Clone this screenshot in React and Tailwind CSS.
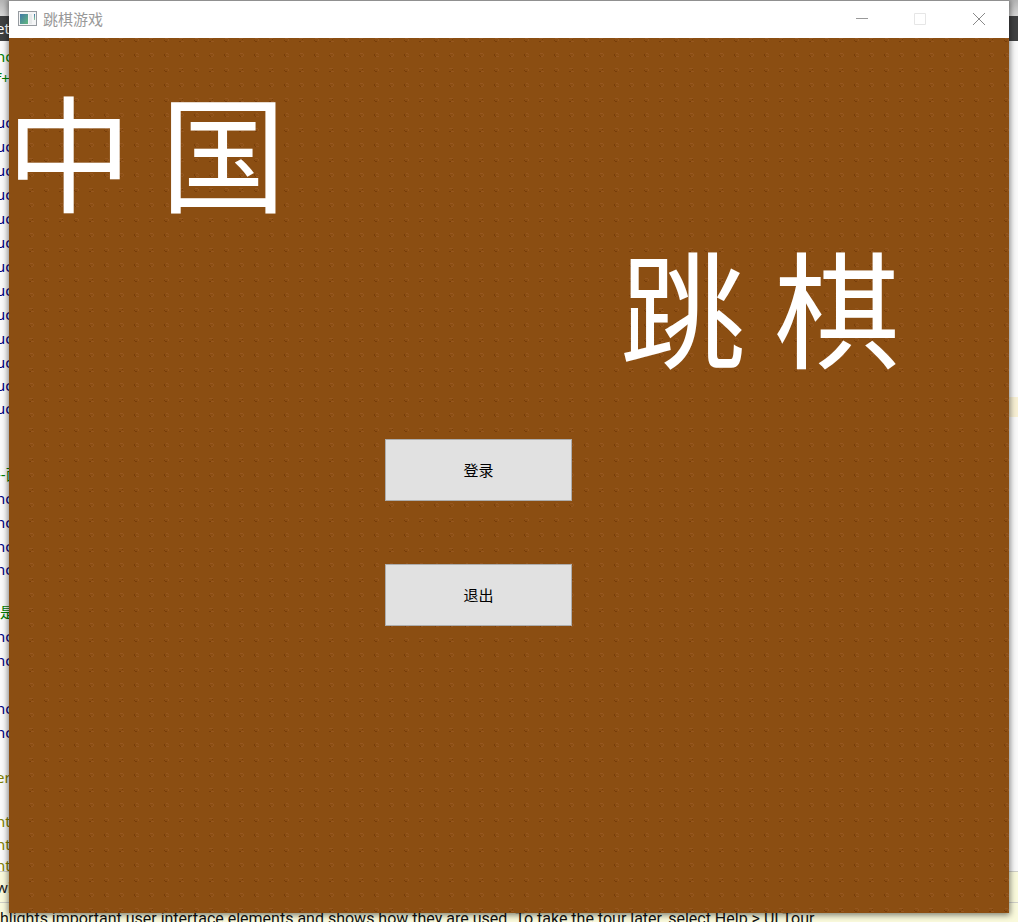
import React from 'react';

const C = {
  navy: 'text-[#000080]',
  green: 'text-[#008000]',
  olive: 'text-[#808000]',
};

const LINES = [
  ['nc', C.green, 'h-6'],
  ['f+', C.green, 'h-5'],
  ['', C.green, 'h-[22px]'],
  ...Array.from({ length: 11 }, () => ['uc', C.navy, 'h-6']),
  ['uc', C.navy, 'h-[22px]'],
  ['uc', C.navy, 'h-6'],
  ['', C.navy, 'h-[42px]'],
  ['--面', C.green, 'h-6'],
  ['nc', C.navy, 'h-6'],
  ['nc', C.navy, 'h-6'],
  ['nc', C.navy, 'h-6'],
  ['nc', C.navy, 'h-[22px]'],
  ['', C.navy, 'h-5'],
  ['是', C.green, 'h-6 pl-1'],
  ['nc', C.navy, 'h-6'],
  ['nc', C.navy, 'h-6'],
  ['', C.navy, 'h-6'],
  ['nc', C.navy, 'h-6'],
  ['nc', C.navy, 'h-6'],
  ['', C.navy, 'h-[21px]'],
  ['er', C.olive, 'h-6'],
  ['', C.navy, 'h-5'],
  ['nt', C.olive, 'h-6'],
  ['nt', C.olive, 'h-[22px]'],
  ['nt', C.olive, 'h-5'],
];

function Editor() {
  return (
    <div className="flex h-screen flex-col overflow-hidden bg-[#fafafa]">
      <div className="h-4 shrink-0 bg-gradient-to-b from-[#b4b4b4] to-[#d8d8d8]" />
      <div className="flex h-[25px] shrink-0 items-center bg-[#404142] text-[15px] text-white">
        <span className="-ml-1">et</span>
      </div>
      <div className="flex min-h-0 flex-1 justify-between overflow-hidden pt-[3px] text-[15px]">
        <div className="-ml-1">
          {LINES.map(([text, color, height], i) => (
            <div key={i} className={`flex items-center whitespace-nowrap ${color} ${height}`}>{text}</div>
          ))}
        </div>
        <div className="mt-[353px] h-5 w-3 bg-[#f8f0d4]" />
      </div>
      <div className="flex h-8 shrink-0 items-center border-y border-[#d0d0c8] bg-[#fafadc] text-[15px] text-[#202020]">
        <span className="-ml-1">wi</span>
      </div>
      <div className="h-[19px] shrink-0 overflow-hidden whitespace-nowrap bg-[#fafadc] pt-1 font-['Roboto',sans-serif] text-[16px] leading-6 text-[#101010]">
        hlights important user interface elements and shows how they are used. To take the tour later, select Help &gt; UI Tour.
      </div>
    </div>
  );
}

function Texture() {
  return (
    <svg className="absolute inset-0 h-full w-full" aria-hidden="true" shapeRendering="crispEdges">
      <defs>
        <pattern id="grain" x="20" y="15" width="30" height="30" patternUnits="userSpaceOnUse">
          <g fill="#965720">
            <path d="M1 0h3v1h-3zM4 1h1v2h-1zM2 3h2v1h-2z" />
            <path d="M17 0h2v1h-2zM19 1h1v1h-1zM17 3h3v1h-3z" />
            <path d="M0 15h4v1h-4zM2 18h3v1h-3z" />
            <path d="M16 15h3v1h-3zM19 16h1v2h-1z" />
          </g>
          <g fill="#773d0a">
            <path d="M0 2h1v1h-1zM1 3h1v1h-1z" />
            <path d="M15 1h1v2h-1zM16 3h1v1h-1z" />
            <path d="M0 18h2v1h-2zM3 16h1v1h-1z" />
            <path d="M15 17h1v1h-1zM16 18h2v1h-2z" />
          </g>
        </pattern>
      </defs>
      <rect x="20" y="0" width="100%" height="100%" fill="url(#grain)" />
    </svg>
  );
}

function AppIcon() {
  return (
    <svg className="h-4 w-5" viewBox="0 0 20 16" aria-hidden="true">
      <defs>
        <linearGradient id="pane" x1="0" y1="0" x2="1" y2="1">
          <stop offset="0" stopColor="#3f78a8" />
          <stop offset="1" stopColor="#62b87c" />
        </linearGradient>
        <linearGradient id="bar" x1="0" y1="0" x2="0" y2="1">
          <stop offset="0" stopColor="#3f78a8" />
          <stop offset="1" stopColor="#8fd09a" />
        </linearGradient>
      </defs>
      <rect x="0.5" y="0.5" width="18" height="14" fill="#f4f5f6" stroke="#969ba0" />
      <rect x="2" y="3" width="8" height="10" fill="url(#pane)" />
      <rect x="11" y="3" width="3" height="10" fill="#e6e9ea" />
      <rect x="16" y="3" width="1" height="6" fill="url(#bar)" />
    </svg>
  );
}

function TitleBar() {
  return (
    <header className="flex h-[37px] shrink-0 items-center bg-white pb-px pl-[9px]">
      <AppIcon />
      <h1 className="ml-[5px] flex-1 text-[15px] leading-5 text-[#999999]">跳棋游戏</h1>
      <button aria-label="最小化" className="flex h-full w-[58px] items-center justify-center">
        <svg className="h-3 w-3" viewBox="0 0 12 12" aria-hidden="true"><path d="M0 5.5h12" stroke="#999" fill="none" /></svg>
      </button>
      <button aria-label="最大化" disabled className="flex h-full w-[58px] items-center justify-center">
        <svg className="h-3 w-3" viewBox="0 0 12 12" aria-hidden="true"><path d="M.5 .5h11v11h-11z" stroke="#e6e6e6" fill="none" /></svg>
      </button>
      <button aria-label="关闭" className="flex h-full w-[60px] items-center justify-center">
        <svg className="h-3 w-3" viewBox="0 0 12 12" aria-hidden="true"><path d="M0 0l12 12M12 0L0 12" stroke="#8a8a8a" fill="none" /></svg>
      </button>
    </header>
  );
}

function MenuButton({ children }) {
  return (
    <button className="flex h-[62px] w-[187px] items-center justify-center border border-[#adadad] bg-[#e1e1e1] text-[15px] text-black">
      {children}
    </button>
  );
}

export default function App() {
  return (
    <div className="relative min-h-screen overflow-hidden font-['Noto_Sans','Noto_Sans_CJK_SC',sans-serif]">
      <Editor />
      <div className="absolute inset-x-[9px] top-0 bottom-[9px] flex flex-col border-t border-[#909090] shadow-[0_1px_6px_1px_rgba(0,0,0,0.5)] font-['Noto_Sans_CJK_SC',sans-serif]">
        <TitleBar />
        <main className="relative flex-1 overflow-hidden bg-[#8b4e12]">
          <Texture />
          <div className="relative flex flex-col pt-8">
            <p className="-ml-[3px] whitespace-nowrap text-[126px] leading-[156px] text-white">中 国</p>
            <p className="mr-[109px] self-end whitespace-nowrap text-[126px] leading-[156px] text-white">跳 棋</p>
            <div className="mt-[57px] mr-[61px] flex flex-col items-center gap-[63px]">
              <MenuButton>登录</MenuButton>
              <MenuButton>退出</MenuButton>
            </div>
          </div>
        </main>
      </div>
    </div>
  );
}
